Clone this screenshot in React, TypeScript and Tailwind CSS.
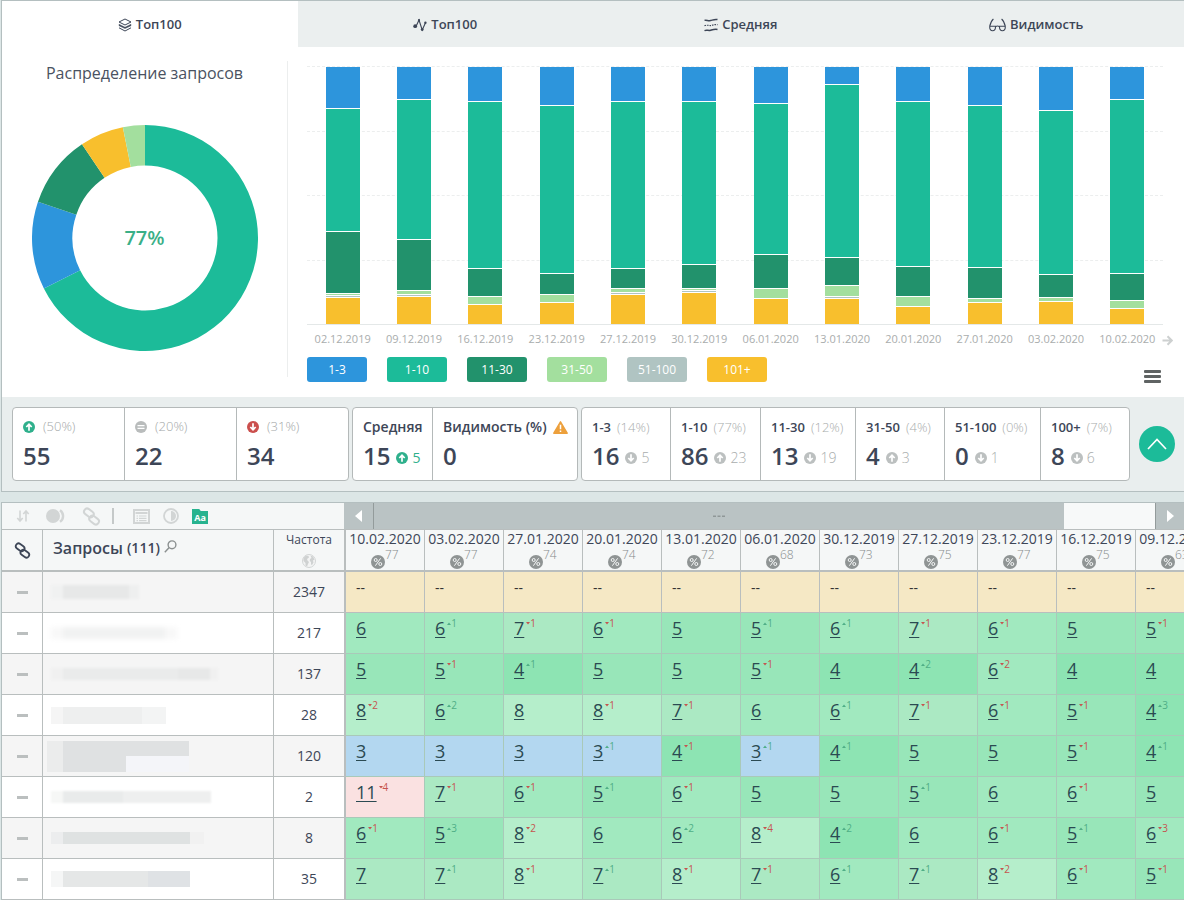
import { useState } from "react";

const BANDS = [
  { label: "1-3", bg: "bg-[#2d95dc]" },
  { label: "1-10", bg: "bg-[#1cbb99]" },
  { label: "11-30", bg: "bg-[#22926c]" },
  { label: "31-50", bg: "bg-[#a3df9e]" },
  { label: "51-100", bg: "bg-[#b0c4c2]" },
  { label: "101+", bg: "bg-[#f8bf2d]" },
];

// share of each band, top to bottom
const BARS = [
  { date: "02.12.2019", parts: [41, 123, 62, 2, 2, 27] },
  { date: "09.12.2019", parts: [32, 140, 51, 4, 2, 28] },
  { date: "16.12.2019", parts: [34, 167, 28, 8, 0, 20] },
  { date: "23.12.2019", parts: [38, 168, 21, 8, 0, 22] },
  { date: "27.12.2019", parts: [34, 167, 20, 4, 2, 30] },
  { date: "30.12.2019", parts: [34, 163, 24, 2, 2, 32] },
  { date: "06.01.2020", parts: [36, 151, 34, 10, 0, 26] },
  { date: "13.01.2020", parts: [17, 173, 28, 11, 2, 26] },
  { date: "20.01.2020", parts: [34, 165, 30, 10, 0, 18] },
  { date: "27.01.2020", parts: [38, 162, 31, 4, 0, 22] },
  { date: "03.02.2020", parts: [43, 164, 23, 4, 0, 23] },
  { date: "10.02.2020", parts: [32, 174, 27, 8, 0, 16] },
];
const BAR_TOTAL = 257;

const SLICES = [
  { from: 0, to: 243.5, color: "#1cbb99" },
  { from: 243.5, to: 288.7, color: "#2d95dc" },
  { from: 288.7, to: 326.1, color: "#22926c" },
  { from: 326.1, to: 348.7, color: "#f8bf2d" },
  { from: 348.7, to: 360, color: "#a3df9e" },
];

const RANGES = [
  { name: "1-3", share: "(14%)", count: 16, dir: "down", diff: 5 },
  { name: "1-10", share: "(77%)", count: 86, dir: "up", diff: 23 },
  { name: "11-30", share: "(12%)", count: 13, dir: "down", diff: 19 },
  { name: "31-50", share: "(4%)", count: 4, dir: "up", diff: 3 },
  { name: "51-100", share: "(0%)", count: 0, dir: "down", diff: 1 },
  { name: "100+", share: "(7%)", count: 8, dir: "down", diff: 6 },
];

const MOVES = [
  { dir: "up", share: "(50%)", count: 55, color: "text-[#2fb08c]" },
  { dir: "same", share: "(20%)", count: 22, color: "text-[#b9bcbc]" },
  { dir: "down", share: "(31%)", count: 34, color: "text-[#cb4f4d]" },
];

const DATES = [
  ["10.02.2020", 77], ["03.02.2020", 77], ["27.01.2020", 74], ["20.01.2020", 74],
  ["13.01.2020", 72], ["06.01.2020", 68], ["30.12.2019", 73], ["27.12.2019", 75],
  ["23.12.2019", 77], ["16.12.2019", 75], ["09.12.2019", 63],
];

// "7-1" = position 7, dropped by 1; "6+1" = position 6, rose by 1
const ROWS = [
  { freq: 2347, cells: "-- -- -- -- -- -- -- -- -- -- --" },
  { freq: 217, cells: "6 6+1 7-1 6-1 5 5+1 6+1 7-1 6-1 5 5-1" },
  { freq: 137, cells: "5 5-1 4+1 5 5 5-1 4 4+2 6-2 4 4" },
  { freq: 28, cells: "8-2 6+2 8 8-1 7-1 6 6+1 7-1 6-1 5-1 4+3" },
  { freq: 120, cells: "3 3 3 3+1 4-1 3+1 4+1 5 5 5-1 4+1" },
  { freq: 2, cells: "11-4 7-1 6-1 5+1 6-1 5 5 5+1 6 6-1 5" },
  { freq: 8, cells: "6-1 5+3 8-2 6 6+2 8-4 4+2 6 6-1 5+1 6-3" },
  { freq: 35, cells: "7 7+1 8-1 7+1 8-1 7-1 6+1 7+1 8-2 6-1 5-1" },
];

const CELL_BG: Record<string, string> = {
  "3": "bg-[#b3d7f0]",
  "4": "bg-[#8de4b3]",
  "5": "bg-[#98e6b9]",
  "6": "bg-[#a1e9bf]",
  "7": "bg-[#abe9c3]",
  "8": "bg-[#b5eecb]",
  "11": "bg-[#fae1e1]",
};

// hidden query texts, one smudge per row
const SMUDGES = [
  <div className="flex h-3.5 w-[88px] blur-[1px]">
    <i className="w-3 bg-[#f0f1f1]" />
    <i className="flex-1 bg-[#e7e8e8]" />
    <i className="w-2.5 bg-[#eeefef]" />
  </div>,
  <div className="flex h-3 w-[126px] blur-[2px]">
    <i className="w-3 bg-[#f8f8f8]" />
    <i className="flex-1 bg-[#f1f2f2]" />
    <i className="w-3 bg-[#f8f8f8]" />
  </div>,
  <div className="flex h-3 w-[167px] blur-[1px]">
    <i className="w-3 bg-[#f0f0f0]" />
    <i className="flex-1 bg-[#eaebeb]" />
    <i className="w-8 bg-[#e7e8e8]" />
    <i className="w-2 bg-[#f0f0f0]" />
  </div>,
  <div className="flex h-[17px] w-[115px]">
    <i className="w-3 bg-[#f5f5f5]" />
    <i className="flex-1 bg-[#eeefef]" />
    <i className="w-6 bg-[#f3f4f4]" />
  </div>,
  <div className="-ml-1 grid h-[31px] w-[142px] grid-cols-[16px_63px_63px] grid-rows-2">
    <i className="row-span-2 bg-[#ebecec]" />
    <i className="col-span-2 bg-[#dfe1e2]" />
    <i className="bg-[#dfe1e2]" />
    <i className="bg-[#f4f5f9]" />
  </div>,
  <div className="flex h-3 w-[160px] blur-[1px]">
    <i className="w-3 bg-[#f6f7f6]" />
    <i className="w-[60px] bg-[#e9ebeb]" />
    <i className="flex-1 bg-[#eeefef]" />
  </div>,
  <div className="flex h-3 w-[153px]">
    <i className="w-3 bg-[#ecedee]" />
    <i className="flex-1 bg-[#dfe2e2]" />
    <i className="w-3.5 bg-[#f1f1f1]" />
  </div>,
  <div className="flex h-4 w-[139px]">
    <i className="w-3 bg-[#f5f6f6]" />
    <i className="flex-1 bg-[#e5e7e7]" />
    <i className="w-[42px] bg-[#dfe2e5]" />
  </div>,
];

function slicePath(from: number, to: number) {
  const pt = (deg: number, r: number) => {
    const a = (deg * Math.PI) / 180;
    return `${113 + r * Math.sin(a)} ${113 - r * Math.cos(a)}`;
  };
  const big = to - from > 180 ? 1 : 0;
  return `M${pt(from, 113)}A113 113 0 ${big} 1 ${pt(to, 113)}L${pt(to, 72.5)}A72.5 72.5 0 ${big} 0 ${pt(from, 72.5)}Z`;
}

function LayersIcon() {
  return (
    <svg width="14" height="14" viewBox="0 0 14 14" fill="none" stroke="currentColor" strokeWidth="1">
      <path d="M7 1 13 4 7 7 1 4z" />
      <path d="M1 6.2 7 9.2l6-3v1.6L7 10.6 1 7.8z" fill="currentColor" strokeWidth=".4" />
      <path d="m1 9.8 6 3.2 6-3.2" />
    </svg>
  );
}

function PulseIcon() {
  return (
    <svg width="14" height="14" viewBox="0 0 14 14" fill="none" stroke="currentColor" strokeWidth="1.1">
      <path d="M2 8.5 3.2 8 6 2l3.2 10L12.4 5" />
      <g fill="currentColor" stroke="none">
        <circle cx="2.2" cy="8.2" r="1.9" />
        <circle cx="6" cy="2.2" r="1.1" />
        <circle cx="9.2" cy="11.6" r="1.4" />
        <circle cx="12.4" cy="4.8" r="1.2" />
      </g>
    </svg>
  );
}

function WavesIcon() {
  return (
    <svg width="14" height="14" viewBox="0 0 14 14" fill="none" stroke="currentColor" strokeWidth="1.5">
      <path d="M.5 2.4c2-.8 3.6.8 6 .2s4-1.6 7-1" />
      <path d="M.5 7.6c3-1 5 .4 7-.2s4-1 6-.8" strokeDasharray="1.5 1" strokeWidth="1.2" />
      <path d="M.5 12.6c2-1 4 .3 6-.3s4-1.5 7-.9" />
    </svg>
  );
}

function GlassesIcon() {
  return (
    <svg width="17" height="14" viewBox="0 0 17 14" fill="none" stroke="currentColor" strokeWidth="1.1">
      <path d="M.8 8.200h5.600c.4 3-1 4.600-2.800 4.600S.4 11.200.8 8.200zM10.600 8.200h5.600c.4 3-1 4.600-2.800 4.600s-3.200-1.600-2.800-4.600z" />
      <path d="M6.500 8.700c1.200-.8 2.800-.8 4 0M.8 8.200C1.500 5 2.600 2.500 4.400 1M16.200 8.200C15.500 5 14.400 2.500 12.600 1" />
    </svg>
  );
}

const TABS = [
  { name: "Топ100", icon: <LayersIcon /> },
  { name: "Топ100", icon: <PulseIcon /> },
  { name: "Средняя", icon: <WavesIcon /> },
  { name: "Видимость", icon: <GlassesIcon /> },
];

function RoundArrow({ dir }: { dir: string }) {
  return (
    <svg className="shrink-0" width="12" height="12" viewBox="0 0 12 12" fill="none">
      <circle cx="6" cy="6" r="6" fill="currentColor" />
      {dir === "up" && <path d="M6 9.8V3.5M3.3 6 6 3.3 8.7 6" stroke="#fff" strokeWidth="1.7" />}
      {dir === "down" && <path d="M6 2.2v6.3M3.3 6 6 8.7 8.7 6" stroke="#fff" strokeWidth="1.7" />}
      {dir === "same" && <path d="M2.500 4.700h7M2.500 7.300h7" stroke="#fff" strokeWidth="1.300" />}
    </svg>
  );
}

function ChainIcon({ size }: { size: number }) {
  return (
    <svg width={size} height={size} viewBox="0 0 16 16" fill="none" stroke="currentColor" strokeWidth="1.7">
      <rect x="-4.4" y="-2.6" width="8.8" height="5.2" rx="2.6" transform="translate(5.8 5) rotate(36)" />
      <rect x="-4.4" y="-2.6" width="8.8" height="5.2" rx="2.6" transform="translate(10.2 11) rotate(36)" />
    </svg>
  );
}

function PositionCell({ value }: { value: string }) {
  const [, pos, sign, diff] = value.match(/^(--|\d+)([+-])?(\d+)?$/) ?? [];
  if (pos === "--") {
    return (
      <td className="border-r border-b border-[#b9bebe] bg-[#f5e8c5] p-0 pt-1.5 pl-2.5 align-top text-sm leading-5 text-[#333]">
        --
      </td>
    );
  }
  return (
    <td className={`border-r border-b border-[#a9c9b9] p-0 pt-[3px] pl-2.5 align-top ${CELL_BG[pos]}`}>
      <div className="flex items-start">
        <a href="#" className="text-lg leading-6 text-[#2b4a52] underline decoration-1 underline-offset-2">{pos}</a>
        {sign && (
          <span className={`ml-0.5 flex items-center text-[10px] leading-3.5 ${sign === "+" ? "text-[#4fae86]" : "text-[#c5544f]"}`}>
            <svg width="4" height="3" viewBox="0 0 4 3" fill="currentColor">
              <path d={sign === "+" ? "M0 3h4L2 .5z" : "M0 0h4L2 2.5z"} />
            </svg>
            {diff}
          </span>
        )}
      </div>
    </td>
  );
}

export default function App() {
  const [tab, setTab] = useState(0);

  return (
    <main className="overflow-hidden bg-[#dce6e6] pl-px font-['Open_Sans',sans-serif] text-[#3d4657]">
      {/* Chart panel */}
      <section className="border-t border-b border-l border-[#b4bfc0] bg-white">
        <nav className="grid grid-cols-4">
          {TABS.map((t, i) => (
            <button
              key={i}
              onClick={() => setTab(i)}
              className={`flex h-[46px] items-center justify-center gap-1 pt-0.5 text-[13px] font-semibold ${i === tab ? "bg-white" : "bg-[#ebefef]"}`}
            >
              {t.icon}
              {t.name}
            </button>
          ))}
        </nav>

        <div className="flex h-[350px]">
          <div className="mt-3.5 flex h-[316px] w-[286px] shrink-0 flex-col items-center border-r border-[#eceeee]">
            <h2 className="text-base leading-6 text-[#4a5261]">Распределение запросов</h2>
            <div className="relative mt-10 flex h-[226px] w-[226px] items-center justify-center">
              <svg className="absolute inset-0" viewBox="0 0 226 226">
                {SLICES.map((s) => (
                  <path key={s.from} d={slicePath(s.from, s.to)} fill={s.color} />
                ))}
              </svg>
              <span className="relative text-xl font-semibold text-[#3aaf87]">77%</span>
            </div>
          </div>

          <div className="flex-1 pt-[19px] pr-[21px] pl-[19px]">
            <div className="relative h-[259px] border-b border-[#e4e8e8]">
              <div className="absolute inset-0 grid grid-rows-4">
                {[0, 1, 2, 3].map((g) => (
                  <div key={g} className="border-t border-dashed border-[#eceeee]" />
                ))}
              </div>
              <div className="relative grid h-full grid-cols-12 pt-px">
                {BARS.map((bar) => (
                  <div key={bar.date} className="mx-auto h-full w-[34px]">
                    {bar.parts.map((p, i) =>
                      p > 0 && (
                        <div
                          key={i}
                          className={`${BANDS[i].bg} ${i > 0 ? "border-t border-white" : ""}`}
                          style={{ height: `${(p / BAR_TOTAL) * 100}%` }}
                        />
                      )
                    )}
                  </div>
                ))}
              </div>
            </div>

            <div className="relative mt-1.5 grid grid-cols-12 text-center text-[11px] leading-4 text-[#a9adad]">
              {BARS.map((bar) => (
                <span key={bar.date}>{bar.date}</span>
              ))}
              <button aria-label="Вперёд" className="absolute top-1 -right-2.5 text-[#cdd0d0]">
                <svg width="11" height="11" viewBox="0 0 11 11" fill="none" stroke="currentColor" strokeWidth="2">
                  <path d="M.5 5.5h9M5.5 1.2l4.3 4.3-4.3 4.3" />
                </svg>
              </button>
            </div>

            <div className="mt-2.5 flex items-start gap-5">
              {BANDS.map((b) => (
                <button key={b.label} className={`h-[25px] w-[60px] rounded-[3px] text-xs text-white ${b.bg}`}>
                  {b.label}
                </button>
              ))}
              <button aria-label="Меню" className="mt-[13px] mr-0.5 ml-auto flex w-[17px] flex-col gap-0.5">
                <i className="h-[3px] rounded-[1px] bg-[#5f6363]" />
                <i className="h-[3px] rounded-[1px] bg-[#5f6363]" />
                <i className="h-[3px] rounded-[1px] bg-[#5f6363]" />
              </button>
            </div>
          </div>
        </div>

        {/* Summary */}
        <div className="flex items-center gap-[3px] bg-[#e9eeee] py-2.5 pr-[9px] pl-2.5">
          <div className="grid h-[74px] flex-[335] grid-cols-[111fr_112fr_112fr] rounded border border-[#b4b9b9] bg-white">
            {MOVES.map((m) => (
              <div key={m.dir} className="border-l border-[#b4b9b9] pt-[9px] pl-2.5 first:border-l-0">
                <div className={`flex h-5 items-center gap-2 ${m.color}`}>
                  <RoundArrow dir={m.dir} />
                  <span className="text-[13px] font-light text-[#a4a8a8]">{m.share}</span>
                </div>
                <div className="mt-[3px] text-2xl leading-8 font-semibold">{m.count}</div>
              </div>
            ))}
          </div>

          <div className="grid h-[74px] flex-[224] grid-cols-[79px_1fr] rounded border border-[#b4b9b9] bg-white">
            <div className="pt-[9px] pl-2.5">
              <div className="text-sm leading-5 font-semibold">Средняя</div>
              <div className="mt-[3px] flex items-center gap-1.5 text-2xl leading-8 font-semibold">
                15
                <span className="flex items-center gap-1 pt-1 text-sm leading-5 font-normal text-[#2fb08c]">
                  <RoundArrow dir="up" />5
                </span>
              </div>
            </div>
            <div className="border-l border-[#b4b9b9] pt-[9px] pl-2.5">
              <div className="flex items-center gap-1.5 text-sm leading-5 font-semibold whitespace-nowrap">
                Видимость (%)
                <svg width="15" height="13" viewBox="0 0 15 13">
                  <path d="M7.5.8 14.2 12.2H.8z" fill="#eda03c" stroke="#eda03c" strokeWidth="1.4" strokeLinejoin="round" />
                  <path d="M7.5 3.8v4.4M7.5 9.4v1.6" stroke="#fff" strokeWidth="1.5" />
                </svg>
              </div>
              <div className="mt-[3px] text-2xl leading-8 font-semibold">0</div>
            </div>
          </div>

          <div className="grid h-[74px] flex-[547] grid-cols-[88fr_90fr_95fr_89fr_96fr_89fr] rounded border border-[#b4b9b9] bg-white">
            {RANGES.map((r) => (
              <div key={r.name} className="border-l border-[#b4b9b9] pt-[9px] pl-2.5 whitespace-nowrap first:border-l-0">
                <div className="flex gap-1.5 text-[13px] leading-5 font-semibold">
                  {r.name}
                  <span className="font-light text-[#a9adad]">{r.share}</span>
                </div>
                <div className="mt-[3px] flex items-center gap-1.5 text-2xl leading-8 font-semibold">
                  {r.count}
                  <span className="flex items-center gap-1 pt-1 text-sm leading-5 font-light text-[#a9adad]">
                    <span className="text-[#bcc0c0]"><RoundArrow dir={r.dir} /></span>
                    {r.diff}
                  </span>
                </div>
              </div>
            ))}
          </div>

          <button aria-label="Свернуть" className="ml-1.5 flex h-9 w-9 items-center justify-center rounded-full bg-[#1cbb99]">
            <svg width="20" height="12" viewBox="0 0 20 12" fill="none" stroke="#fff" strokeWidth="1.7">
              <path d="m1 11 9-9.5L19 11" />
            </svg>
          </button>
        </div>
      </section>

      {/* Positions */}
      <section className="mt-2.5 border-t border-l border-[#b4bfc0] bg-white">
        <div className="flex h-[27px] border-b border-[#b9bebe]">
          <div className="flex w-[342px] shrink-0 items-center bg-[#f5f7f7] pl-3.5 text-[#d2d5d5]">
            <button aria-label="Сортировка">
              <svg width="14" height="14" viewBox="0 0 14 14" fill="none" stroke="currentColor" strokeWidth="1.6">
                <path d="M4 1.5v10M1.3 9 4 12l2.7-3M10 12.5v-10M7.3 5 10 2l2.7 3" />
              </svg>
            </button>
            <button aria-label="Группы" className="ml-4">
              <svg width="20" height="14" viewBox="0 0 20 14">
                <circle cx="7" cy="7" r="7" fill="currentColor" />
                <path d="M14 1.2a7 7 0 0 1 0 11.6" fill="none" stroke="currentColor" strokeWidth="2.4" />
              </svg>
            </button>
            <button aria-label="Ссылки" className="ml-4">
              <ChainIcon size={19} />
            </button>
            <i className="ml-[11px] h-4 w-0.5 bg-[#c5c9c9]" />
            <button aria-label="Список" className="ml-[19px]">
              <svg width="17" height="15" viewBox="0 0 17 15" fill="none" stroke="currentColor">
                <path d="M1 1h15v13H1z" strokeWidth="2" />
                <path d="M2.5 4h12" strokeWidth="2" />
                <path d="M3.5 7H5M6 7h7.500M3.500 9.300H5M6 9.300h7.500M3.500 11.600H5M6 11.600h7.500" strokeWidth="1.200" />
              </svg>
            </button>
            <button aria-label="Контраст" className="ml-[13px]">
              <svg width="16" height="16" viewBox="0 0 16 16">
                <circle cx="8" cy="8" r="7" fill="none" stroke="currentColor" strokeWidth="1.8" />
                <path d="M8 3a5 5 0 0 1 0 10z" fill="currentColor" />
              </svg>
            </button>
            <button
              aria-label="Регистр"
              className="mt-px ml-[13px] h-[15px] w-4 bg-[#27b38f] pt-0.5 text-[9px] leading-3 font-bold text-white [clip-path:polygon(0_0,45%_0,55%_14%,100%_14%,100%_100%,0_100%)]"
            >
              Aa
            </button>
          </div>
          <div className="flex flex-1 bg-[#bac3c4]">
            <button aria-label="Назад" className="flex w-[30px] items-center justify-center border-r border-[#939b9b]">
              <svg width="7" height="12" viewBox="0 0 7 12" fill="#fff"><path d="M7 0v12L0 6z" /></svg>
            </button>
            <div className="flex flex-1 items-center justify-center text-[#8f9797]">
              <svg width="12" height="3" viewBox="0 0 12 3" fill="currentColor"><path d="M0 .5h3v1.500H0zM4.500.5h3v1.500h-3zM9 .5h3v1.500H9z" /></svg>
            </div>
            <div className="w-[92px] border-r border-[#939b9b] bg-[#f7f9f9]" />
            <button aria-label="Далее" className="flex w-7 items-center justify-center">
              <svg width="7" height="12" viewBox="0 0 7 12" fill="#fff"><path d="M0 0v12l7-6z" /></svg>
            </button>
          </div>
        </div>

        <div className="overflow-hidden">
          <table className="w-[1213px] table-fixed border-separate border-spacing-0">
            <colgroup>
              <col className="w-[41px]" />
              <col className="w-[231px]" />
              <col className="w-[72px]" />
              {DATES.map(([d]) => <col key={d} className="w-[79px]" />)}
            </colgroup>
            <thead>
              <tr className="h-[42px] bg-[#f5f7f7]">
                <th className="border-r border-b-2 border-[#b9bebe] p-0">
                  <div className="flex justify-center"><ChainIcon size={17} /></div>
                </th>
                <th className="border-r border-b-2 border-[#b9bebe] p-0 pb-1 pl-2.5 text-left font-semibold">
                  <div className="flex items-center leading-5">
                    Запросы
                    <span className="ml-1 text-sm">(111)</span>
                    <svg className="mb-1 ml-1" width="13" height="13" viewBox="0 0 13 13" fill="none" stroke="#8b9090" strokeWidth="1.4">
                      <circle cx="8" cy="4.8" r="3.9" />
                      <path d="M5.2 7.500.8 12.200" />
                    </svg>
                  </div>
                </th>
                <th className="border-r-2 border-b-2 border-[#b9bebe] p-0 text-xs leading-4 font-medium">
                  Частота
                  <svg className="mx-auto mt-1.5" width="14" height="14" viewBox="0 0 14 14">
                    <circle cx="7" cy="7" r="6.5" fill="#f3f4f4" stroke="#d3d6d6" />
                    <path d="M1.500 4 4 1.500 6.500 2 7 3.500 5 5l.5 1.500L7 8l-1 2-1 2.500-1.500-1L3.500 9 1.500 7zM8.500 1.500 11 2.500l1.500 3-1.500 1 .5 2-1.500 2.500-1-.5L9 8 7.800 7 8 5l1.500-1z" fill="#cfd2d2" />
                  </svg>
                </th>
                {DATES.map(([d, pct]) => (
                  <th key={d} className="border-r border-b-2 border-[#b9bebe] p-0 text-sm leading-[18px] font-normal">
                    {d}
                    <div className="ml-[25px] flex h-[22px] pt-px">
                      <svg className="mt-1.5" width="14" height="14" viewBox="0 0 14 14" fill="none" stroke="#f5f7f7">
                        <circle cx="7" cy="7" r="7" fill="#8f9494" stroke="none" />
                        <circle cx="4.7" cy="5" r="1.5" />
                        <circle cx="9.3" cy="9" r="1.5" />
                        <path d="M9.6 3.3 4.4 10.7" />
                      </svg>
                      <span className="text-xs leading-3 font-light text-[#868b8b]">{pct}</span>
                    </div>
                  </th>
                ))}
              </tr>
            </thead>
            <tbody>
              {ROWS.map((row, i) => (
                <tr key={row.freq} className={`h-[41px] ${i % 2 ? "bg-white" : "bg-[#f5f5f5]"}`}>
                  <td className="border-r border-b border-[#b9bebe] p-0">
                    <i className="mx-auto block h-[3px] w-[11px] bg-[#bbbfbf]" />
                  </td>
                  <td className="border-r border-b border-[#b9bebe] p-0 pl-2">{SMUDGES[i]}</td>
                  <td className="border-r-2 border-b border-[#b9bebe] p-0 text-center text-sm leading-5">{row.freq}</td>
                  {row.cells.split(" ").map((c, j) => <PositionCell key={j} value={c} />)}
                </tr>
              ))}
            </tbody>
          </table>
        </div>
      </section>
    </main>
  );
}
